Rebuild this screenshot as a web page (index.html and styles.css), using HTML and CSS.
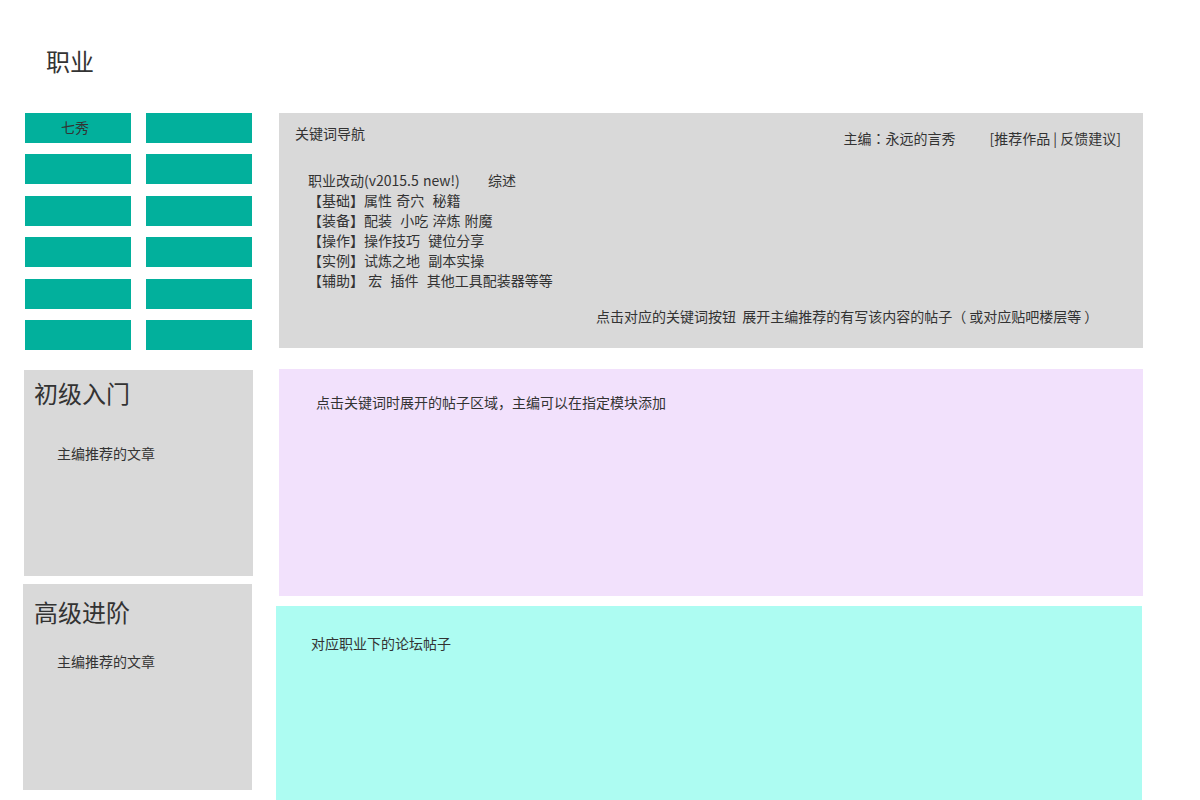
FILE: index.html
```html
<!DOCTYPE html>
<html lang="zh-CN">
<head>
<meta charset="utf-8">
<title>职业</title>
<link rel="stylesheet" href="styles.css">
</head>
<body>
<div class="page">
  <header class="header">
    <h1 class="page-title">职业</h1>
  </header>
  <div class="main">
    <aside class="left">
      <div class="class-grid">
        <div class="class-btn">七秀</div>
        <div class="class-btn"></div>
        <div class="class-btn"></div>
        <div class="class-btn"></div>
        <div class="class-btn"></div>
        <div class="class-btn"></div>
        <div class="class-btn"></div>
        <div class="class-btn"></div>
        <div class="class-btn"></div>
        <div class="class-btn"></div>
        <div class="class-btn"></div>
        <div class="class-btn"></div>
      </div>
      <section class="side-box side-box--basic">
        <h2 class="side-title">初级入门</h2>
        <p class="side-text">主编推荐的文章</p>
      </section>
      <section class="side-box side-box--adv">
        <h2 class="side-title">高级进阶</h2>
        <p class="side-text">主编推荐的文章</p>
      </section>
    </aside>
    <div class="right">
      <section class="nav-box">
        <div class="nav-head">
          <span class="nav-label">关键词导航</span>
          <div class="nav-meta">
            <span class="editor">主编<span class="colon" lang="ja">：</span>永远的言秀</span>
            <span class="links">[推荐作品 | 反馈建议]</span>
          </div>
        </div>
        <div class="nav-list">
          <div class="nav-line"><span class="nav-first">职业改动(v2015.5 new!)</span><span>综述</span></div>
          <div class="nav-line">【基础】属性 奇穴&nbsp;&nbsp;秘籍</div>
          <div class="nav-line">【装备】配装&nbsp;&nbsp;小吃 淬炼 附魔</div>
          <div class="nav-line">【操作】操作技巧&nbsp;&nbsp;键位分享</div>
          <div class="nav-line">【实例】试炼之地&nbsp;&nbsp;副本实操</div>
          <div class="nav-line">【辅助】 宏&nbsp;&nbsp;插件&nbsp;&nbsp;其他工具配装器等等</div>
        </div>
        <p class="nav-note">点击对应的关键词按钮&nbsp;&nbsp;展开主编推荐的有写该内容的帖子<span class="paren-open">（</span>或对应贴吧楼层等<span class="paren-close">）</span></p>
      </section>
      <section class="posts-box">
        <p class="box-text">点击关键词时展开的帖子区域，主编可以在指定模块添加</p>
      </section>
      <section class="forum-box">
        <p class="box-text">对应职业下的论坛帖子</p>
      </section>
    </div>
  </div>
</div>
</body>
</html>
```

FILE: styles.css
```css
* { box-sizing: border-box; }

html, body {
  margin: 0;
  padding: 0;
  background: #ffffff;
}

body {
  font-family: "Noto Sans CJK SC", "Noto Sans", sans-serif;
  color: #333333;
  font-size: 14px;
  line-height: 20px;
  overflow: hidden;
}

.page {
  width: 1200px;
  height: 800px;
}

.header {
  height: 113px;
  padding: 45px 0 0 46px;
}

.page-title {
  margin: 0;
  font-size: 24px;
  line-height: 32px;
  font-weight: normal;
  color: #333333;
}

.main {
  display: flex;
  align-items: flex-start;
}

/* left column */
.left {
  width: 253px;
  padding-left: 23px;
  display: flex;
  flex-direction: column;
}

.class-grid {
  margin-left: 2px;
  display: grid;
  grid-template-columns: 106px 106px;
  grid-auto-rows: 30px;
  column-gap: 15px;
  row-gap: 11.4px;
}

.class-btn {
  background: #02b09c;
  color: #333333;
  text-align: center;
  line-height: 28px;
  font-size: 14px;
  padding-right: 6px;
}

.side-box {
  width: 229px;
  height: 206px;
  background: #d9d9d9;
}

.side-box--basic {
  margin: 20px 0 0 1px;
  padding: 7px 0 0 10px;
}

.side-box--adv {
  margin-top: 8px;
  padding: 12px 0 0 11px;
}

.side-title {
  margin: 0;
  font-size: 24px;
  line-height: 32px;
  font-weight: normal;
  color: #333333;
}

.side-text {
  margin: 0;
  padding-left: 23px;
}

.side-box--basic .side-text { margin-top: 34.5px; }
.side-box--adv .side-text { margin-top: 23px; }

/* right column */
.right {
  margin-left: 23px;
  display: flex;
  flex-direction: column;
}

.nav-box {
  margin-left: 3px;
  width: 864px;
  height: 235px;
  background: #d9d9d9;
  padding: 9.5px 22px 0 16px;
  display: flex;
  flex-direction: column;
}

.nav-head {
  display: flex;
  justify-content: space-between;
  align-items: flex-start;
}

.nav-meta {
  margin-top: 5px;
  display: flex;
  gap: 32px;
}

.editor {
  margin-right: 2px;
}

.colon {
  font-family: "Noto Sans CJK JP", "Noto Sans CJK SC", sans-serif;
}

.nav-list {
  margin-top: 22.5px;
  padding-left: 13px;
}

.nav-line {
  line-height: 20px;
  white-space: nowrap;
  word-spacing: 1px;
}

.nav-first {
  display: inline-block;
  width: 180px;
}

.nav-note {
  margin: 16px 0 0 301px;
  white-space: nowrap;
}

.paren-open { margin-right: 3px; }
.paren-close { margin-left: 3px; }

.posts-box {
  margin: 21px 0 0 3px;
  width: 864px;
  height: 227px;
  background: #f2e1fc;
  padding: 22.5px 0 0 37px;
}

.forum-box {
  margin-top: 10px;
  width: 866px;
  height: 194px;
  background: #adfcf2;
  padding: 27px 0 0 35px;
}

.box-text {
  margin: 0;
}
```
